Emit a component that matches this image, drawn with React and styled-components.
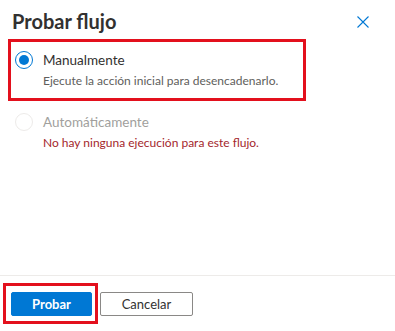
import * as React from "react";
import styled, { createGlobalStyle } from "styled-components";

const GlobalStyle = createGlobalStyle`
  html, body {
    margin: 0;
    padding: 0;
    background: #fff;
  }
  body {
    font-family: "Segoe UI", Lato, "Open Sans", sans-serif;
    -webkit-font-smoothing: antialiased;
  }
`;

function App() {
  return (
    <Panel>
      <GlobalStyle />
      <Header>
        <Title>Probar flujo</Title>
        <CloseButton aria-label="Cerrar">
          <svg width="12" height="12" viewBox="0 0 12 12">
            <path d="M0.5 0.5 L11.5 11.5 M11.5 0.5 L0.5 11.5" stroke="#0078d4" strokeWidth="1.1" fill="none" />
          </svg>
        </CloseButton>
      </Header>
      <Body>
        <Option $highlight>
          <Radio $checked />
          <OptionText>
            <Label>Manualmente</Label>
            <Description>Ejecute la acción inicial para desencadenarlo.</Description>
          </OptionText>
        </Option>
        <Option>
          <Radio />
          <OptionText>
            <Label $disabled>Automáticamente</Label>
            <Description $error>No hay ninguna ejecución para este flujo.</Description>
          </OptionText>
        </Option>
      </Body>
      <Footer>
        <Highlight>
          <PrimaryButton>Probar</PrimaryButton>
        </Highlight>
        <DefaultButton>Cancelar</DefaultButton>
      </Footer>
    </Panel>
  );
}

const Panel = styled.div`
  display: flex;
  flex-direction: column;
  height: 331px;
  width: 395px;
  background: #fff;
  color: #323130;
`;

const Header = styled.div`
  display: flex;
  align-items: center;
  justify-content: space-between;
  padding: 6px 26px 0 12px;
  height: 30px;
`;

const Title = styled.div`
  font-size: 20px;
  font-weight: 700;
  color: #323130;
  line-height: 28px;
`;

const CloseButton = styled.div`
  display: flex;
  width: 12px;
  height: 12px;
  margin-top: 2px;
`;

const Body = styled.div`
  flex: 1;
  display: flex;
  flex-direction: column;
  padding: 3px 0 0 8px;
`;

const Option = styled.div`
  display: flex;
  align-items: flex-start;
  gap: 10px;
  width: 288px;
  padding: 8px 0 8px 4px;
  border: 3px solid ${(p) => (p.$highlight ? "#e3101d" : "transparent")};
`;

const Radio = styled.div`
  position: relative;
  flex: none;
  box-sizing: border-box;
  width: 18px;
  height: 18px;
  margin-top: 1px;
  border-radius: 50%;
  border: 1px solid ${(p) => (p.$checked ? "#0078d4" : "#edebe9")};
  &::after {
    content: "";
    display: ${(p) => (p.$checked ? "block" : "none")};
    position: absolute;
    left: 3px;
    top: 3px;
    width: 10px;
    height: 10px;
    border-radius: 50%;
    background: #0078d4;
  }
`;

const OptionText = styled.div`
  display: flex;
  flex-direction: column;
  gap: 1px;
  white-space: nowrap;
`;

const Label = styled.div`
  font-size: 13.5px;
  line-height: 21px;
  color: ${(p) => (p.$disabled ? "#a19f9d" : "#323130")};
`;

const Description = styled.div`
  font-size: 12px;
  line-height: 18px;
  color: ${(p) => (p.$error ? "#a4262c" : "#605e5c")};
`;

const Footer = styled.div`
  display: flex;
  align-items: center;
  gap: 8px;
  height: 56px;
  box-sizing: border-box;
  padding: 0 0 0 11px;
  border-top: 1px solid #edebe9;
`;

const Highlight = styled.span`
  position: relative;
  display: flex;
  &::after {
    content: "";
    position: absolute;
    left: -8px;
    right: -6px;
    top: -9px;
    bottom: -8px;
    border: 3px solid #e3101d;
    pointer-events: none;
  }
`;

const ButtonBase = styled.button`
  box-sizing: border-box;
  height: 24px;
  border-radius: 2px;
  font-family: inherit;
  font-size: 13px;
  font-weight: 700;
  padding: 0;
  cursor: pointer;
`;

const PrimaryButton = styled(ButtonBase)`
  width: 81px;
  background: #0078d4;
  border: 1px solid #0078d4;
  color: #fff;
`;

const DefaultButton = styled(ButtonBase)`
  width: 93px;
  background: #fff;
  border: 1px solid #8a8886;
  color: #323130;
  font-weight: 400;
`;

export default App;
